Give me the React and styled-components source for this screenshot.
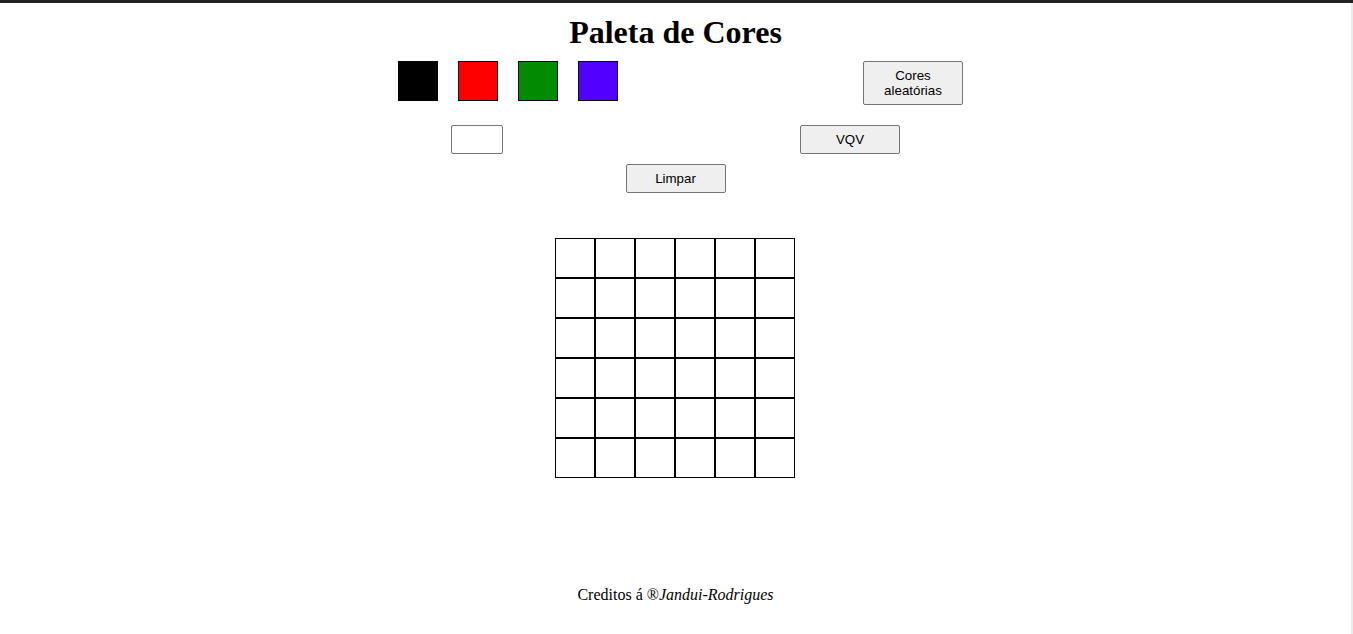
import React from "react";
import styled, { createGlobalStyle } from "styled-components";

const GlobalStyle = createGlobalStyle`
  html, body {
    margin: 0;
    padding: 0;
    background: #fff;
  }
  body {
    border-top: 3px solid #222;
    font-family: "Liberation Serif", "Times New Roman", serif;
    color: #000;
  }
`;

const Page = styled.main`
  display: flex;
  flex-direction: column;
  align-items: center;
  padding-top: 11px;
  min-height: 620px;
  border-right: 2px solid #ececec;
`;

const Title = styled.h1`
  margin: 0;
  font-size: 32px;
  font-weight: bold;
  line-height: 37px;
`;

const TopRow = styled.div`
  display: flex;
  align-items: flex-start;
  gap: 245px;
  margin-top: 10px;
  padding-left: 10px;
`;

const Palette = styled.div`
  display: flex;
  gap: 20px;
`;

const Swatch = styled.div`
  width: 38px;
  height: 38px;
  border: 1px solid #000;
  background: ${(p) => p.color};
`;

const Button = styled.button`
  width: 100px;
  height: ${(p) => p.h || 29}px;
  padding: 1px 6px;
  background: #efefef;
  border: 1px solid #767676;
  border-radius: 2px;
  font-family: "Liberation Sans", Arial, sans-serif;
  font-size: 13.33px;
  line-height: 15px;
  color: #000;
`;

const MidRow = styled.div`
  display: flex;
  gap: 297px;
  margin-top: 20px;
`;

const Input = styled.input`
  box-sizing: border-box;
  width: 52px;
  height: 29px;
  border: 1px solid #767676;
  border-radius: 2px;
  padding: 1px 2px;
  background: #fff;
`;

const ClearRow = styled.div`
  margin-top: 10px;
`;

const Board = styled.div`
  display: grid;
  grid-template-columns: repeat(6, 40px);
  grid-auto-rows: 40px;
  margin-top: 45px;
  margin-left: -2px;
`;

const Pixel = styled.div`
  border: 1px solid #000;
  background: #fff;
`;

const Footer = styled.footer`
  margin-top: 108px;
  font-size: 16px;
  line-height: 18px;
`;

const colors = ["#000000", "#ff0000", "#008b00", "#5200ff"];

export default function App() {
  return (
    <>
      <GlobalStyle />
      <Page>
        <Title>Paleta de Cores</Title>
        <TopRow>
          <Palette>
            {colors.map((c) => (
              <Swatch key={c} color={c} />
            ))}
          </Palette>
          <Button h={44}>Cores aleatórias</Button>
        </TopRow>
        <MidRow>
          <Input type="number" />
          <Button>VQV</Button>
        </MidRow>
        <ClearRow>
          <Button>Limpar</Button>
        </ClearRow>
        <Board>
          {Array.from({ length: 36 }).map((_, i) => (
            <Pixel key={i} />
          ))}
        </Board>
        <Footer>
          Creditos á ®<i>Jandui-Rodrigues</i>
        </Footer>
      </Page>
    </>
  );
}
